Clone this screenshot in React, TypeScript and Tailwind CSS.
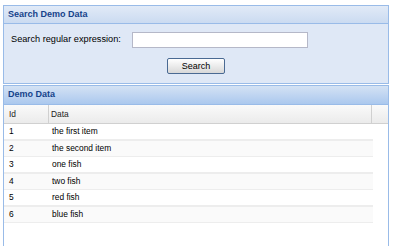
const rows = [
  { id: 1, data: "the first item" },
  { id: 2, data: "the second item" },
  { id: 3, data: "one fish" },
  { id: 4, data: "two fish" },
  { id: 5, data: "red fish" },
  { id: 6, data: "blue fish" },
];

export default function App() {
  return (
    <div className="w-[400px] h-[246px] overflow-hidden bg-white pl-[3px] pt-[5px] font-['Liberation_Sans',Arial,sans-serif]">
      <div className="w-[386px] flex flex-col gap-px">
        {/* search panel */}
        <div className="border border-[#99bbe8]">
          <div className="h-[18px] flex items-center px-[4px] bg-gradient-to-b from-[#e1eaf7] to-[#cbdbf1] border-b border-[#99bbe8]">
            <span className="text-[9px] font-bold text-[#15428b]">Search Demo Data</span>
          </div>
          <div className="h-[59px] bg-[#dfe8f6] pt-[8px]">
            <div className="flex items-center pl-[7px]">
              <label className="w-[121px] text-[9.2px] text-black">Search regular expression:</label>
              <input className="w-[176px] h-[16px] bg-white border border-[#b5b8c8] outline-none" />
            </div>
            <div className="flex justify-center mt-[10px]">
              <button className="w-[58px] h-[16px] rounded-[2px] border border-[#4a6a93] bg-gradient-to-b from-white to-[#d8d8d8] text-[9px] text-black leading-none">
                Search
              </button>
            </div>
          </div>
        </div>

        {/* grid panel */}
        <div className="border-x border-t border-[#99bbe8] h-[170px]">
          <div className="h-[19px] flex items-center px-[4px] bg-gradient-to-b from-[#d4e2f4] to-[#abc8ee] border-b border-[#99bbe8]">
            <span className="text-[9px] font-bold text-[#15428b]">Demo Data</span>
          </div>
          <div className="h-[19px] flex bg-gradient-to-b from-[#fafafa] to-[#ebebeb] border-b border-[#d0d0d0] text-[8.4px] text-[#222]">
            <div className="w-[45px] flex items-center pl-[5px] border-r border-[#d0d0d0]">Id</div>
            <div className="w-[323px] flex items-center pl-[2px] border-r border-[#d0d0d0]">Data</div>
            <div className="flex-1" />
          </div>
          <div className="w-[369px]">
            {rows.map((r, i) => (
              <div
                key={r.id}
                className={`flex text-[8.4px] text-black border-b border-[#ededed] ${
                  i % 2 === 1 ? "h-[17px] bg-[#fafafa] border-t" : "h-[16px] bg-white"
                }`}
              >
                <div className="w-[46px] flex items-center pl-[5px]">{r.id}</div>
                <div className="flex-1 flex items-center pl-[2px]">{r.data}</div>
              </div>
            ))}
          </div>
        </div>
      </div>
    </div>
  );
}
